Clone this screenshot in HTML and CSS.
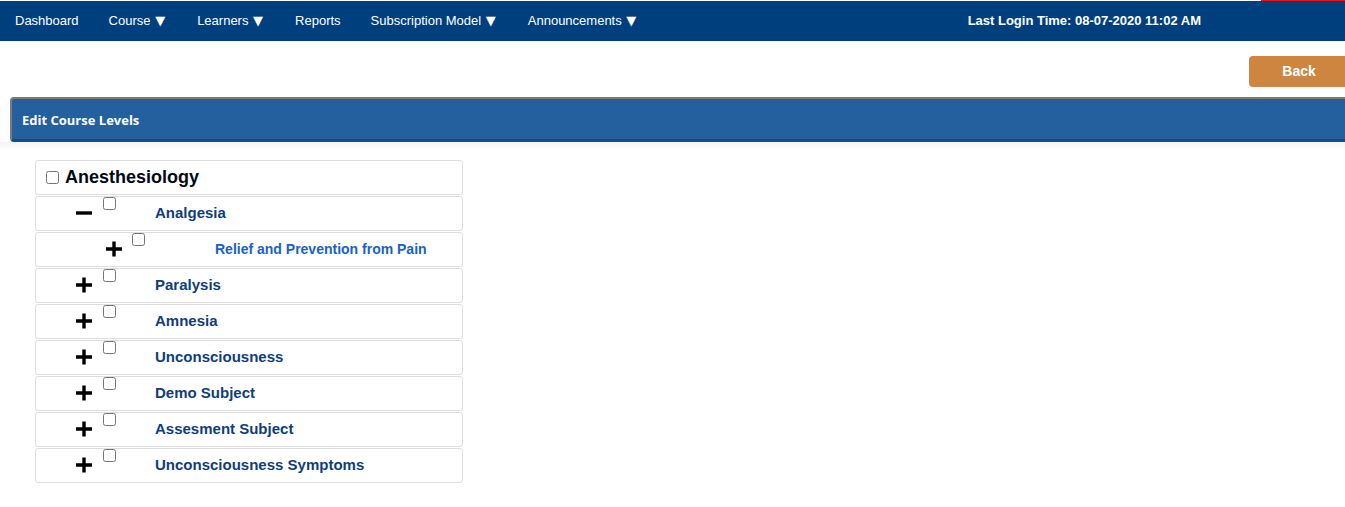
FILE: index.html
```html
<!DOCTYPE html>
<html>
<head>
<meta charset="utf-8">
<link rel="stylesheet" href="styles.css">
</head>
<body>
<div class="topline"><span class="redmark"></span></div>
<nav class="topnav">
  <a class="nav-item">Dashboard</a>
  <a class="nav-item">Course <span class="caret">▼</span></a>
  <a class="nav-item">Learners <span class="caret">▼</span></a>
  <a class="nav-item">Reports</a>
  <a class="nav-item">Subscription Model <span class="caret">▼</span></a>
  <a class="nav-item">Announcements <span class="caret">▼</span></a>
  <span class="login">Last Login Time: 08-07-2020 11:02 AM</span>
</nav>
<div class="actions"><button class="back">Back</button></div>
<div class="panel-head">Edit Course Levels</div>
<div class="panel-fade"></div>
<ul class="tree">
  <li class="row lvl0"><input type="checkbox" class="cb"><span class="name">Anesthesiology</span></li>
  <li class="row lvl1"><span class="toggle"><svg viewBox="0 0 16 16" width="16" height="16"><path d="M0 8H16" stroke="#000" stroke-width="3.4"/></svg></span><input type="checkbox" class="cb"><span class="name">Analgesia</span></li>
  <li class="row lvl2"><span class="toggle"><svg viewBox="0 0 16 16" width="16" height="16"><path d="M0 8H16M8 0.5V15.5" stroke="#000" stroke-width="3.4"/></svg></span><input type="checkbox" class="cb"><span class="name">Relief and Prevention from Pain</span></li>
  <li class="row lvl1"><span class="toggle"><svg viewBox="0 0 16 16" width="16" height="16"><path d="M0 8H16M8 0.5V15.5" stroke="#000" stroke-width="3.4"/></svg></span><input type="checkbox" class="cb"><span class="name">Paralysis</span></li>
  <li class="row lvl1"><span class="toggle"><svg viewBox="0 0 16 16" width="16" height="16"><path d="M0 8H16M8 0.5V15.5" stroke="#000" stroke-width="3.4"/></svg></span><input type="checkbox" class="cb"><span class="name">Amnesia</span></li>
  <li class="row lvl1"><span class="toggle"><svg viewBox="0 0 16 16" width="16" height="16"><path d="M0 8H16M8 0.5V15.5" stroke="#000" stroke-width="3.4"/></svg></span><input type="checkbox" class="cb"><span class="name">Unconsciousness</span></li>
  <li class="row lvl1"><span class="toggle"><svg viewBox="0 0 16 16" width="16" height="16"><path d="M0 8H16M8 0.5V15.5" stroke="#000" stroke-width="3.4"/></svg></span><input type="checkbox" class="cb"><span class="name">Demo Subject</span></li>
  <li class="row lvl1"><span class="toggle"><svg viewBox="0 0 16 16" width="16" height="16"><path d="M0 8H16M8 0.5V15.5" stroke="#000" stroke-width="3.4"/></svg></span><input type="checkbox" class="cb"><span class="name">Assesment Subject</span></li>
  <li class="row lvl1"><span class="toggle"><svg viewBox="0 0 16 16" width="16" height="16"><path d="M0 8H16M8 0.5V15.5" stroke="#000" stroke-width="3.4"/></svg></span><input type="checkbox" class="cb"><span class="name">Unconsciousness Symptoms</span></li>
</ul>
</body>
</html>
```

FILE: styles.css
```css
html, body {
  margin: 0;
  padding: 0;
  background: #fff;
  overflow-x: hidden;
  font-family: "Liberation Sans", Arial, sans-serif;
}

.topline {
  height: 1px;
  display: flex;
  justify-content: flex-end;
  background: #fff;
}
.redmark {
  width: 84px;
  height: 1px;
  background: #e8141c;
}

.topnav {
  box-sizing: border-box;
  height: 40px;
  background: #003f7e;
  display: flex;
  align-items: center;
  padding-bottom: 2px;
}
.nav-item {
  color: #fff;
  font-size: 13px;
  padding: 0 15px;
  white-space: nowrap;
}
.caret {
  font-family: "DejaVu Sans", sans-serif;
  font-size: 13px;
  margin-left: 1px;
  margin-right: 2px;
}
.login {
  margin-left: auto;
  margin-right: 144px;
  color: #fff;
  font-weight: bold;
  font-size: 13px;
}

.actions {
  display: flex;
  justify-content: flex-end;
  padding-top: 15px;
  height: 31px;
}
.back {
  width: 96px;
  height: 31px;
  border: none;
  border-radius: 4px 0 0 4px;
  background: #cd853f;
  color: #fff;
  font-family: "Liberation Sans", Arial, sans-serif;
  font-weight: bold;
  font-size: 14px;
  padding: 0 0 2px 4px;
}

.panel-head {
  box-sizing: border-box;
  margin-top: 10px;
  margin-left: 10px;
  margin-right: -20px;
  height: 45px;
  background: #23609d;
  border-top: 2px solid #7a7a7a;
  border-left: 2px solid #7a7a7a;
  border-bottom: 3px solid #0a4f92;
  border-radius: 4px;
  color: #fff;
  font-family: "Open Sans", sans-serif;
  font-weight: 700;
  font-size: 13px;
  display: flex;
  align-items: center;
  padding-left: 10px;
  padding-top: 1px;
}
.panel-fade {
  height: 8px;
  background: linear-gradient(#f3f3f3, #fff);
}

.tree {
  list-style: none;
  margin: 10px 0 0 35px;
  padding: 0;
  width: 428px;
}
.row {
  box-sizing: border-box;
  height: 35px;
  margin-bottom: 1px;
  border: 1px solid #dedede;
  border-radius: 3px;
  display: flex;
  align-items: center;
}
.cb {
  width: 13px;
  height: 13px;
  margin: 0;
}
.name {
  font-weight: bold;
  margin-bottom: 2px;
}
.toggle {
  width: 16px;
  height: 16px;
  display: flex;
  margin-top: -2px;
}

.lvl0 .cb {
  margin-left: 10px;
}
.lvl0 .name {
  margin-left: 6px;
  font-size: 18px;
  color: #000814;
  margin-bottom: 0;
}

.lvl1 .toggle { margin-left: 40px; }
.lvl1 .cb {
  align-self: flex-start;
  margin-left: 11px;
}
.lvl1 .name {
  margin-left: 39px;
  font-size: 15px;
  color: #103d7b;
}

.lvl2 .toggle { margin-left: 70px; }
.lvl2 .cb {
  align-self: flex-start;
  margin-left: 10px;
}
.lvl2 .name {
  margin-left: 70px;
  font-size: 14px;
  color: #1763c4;
}
```
